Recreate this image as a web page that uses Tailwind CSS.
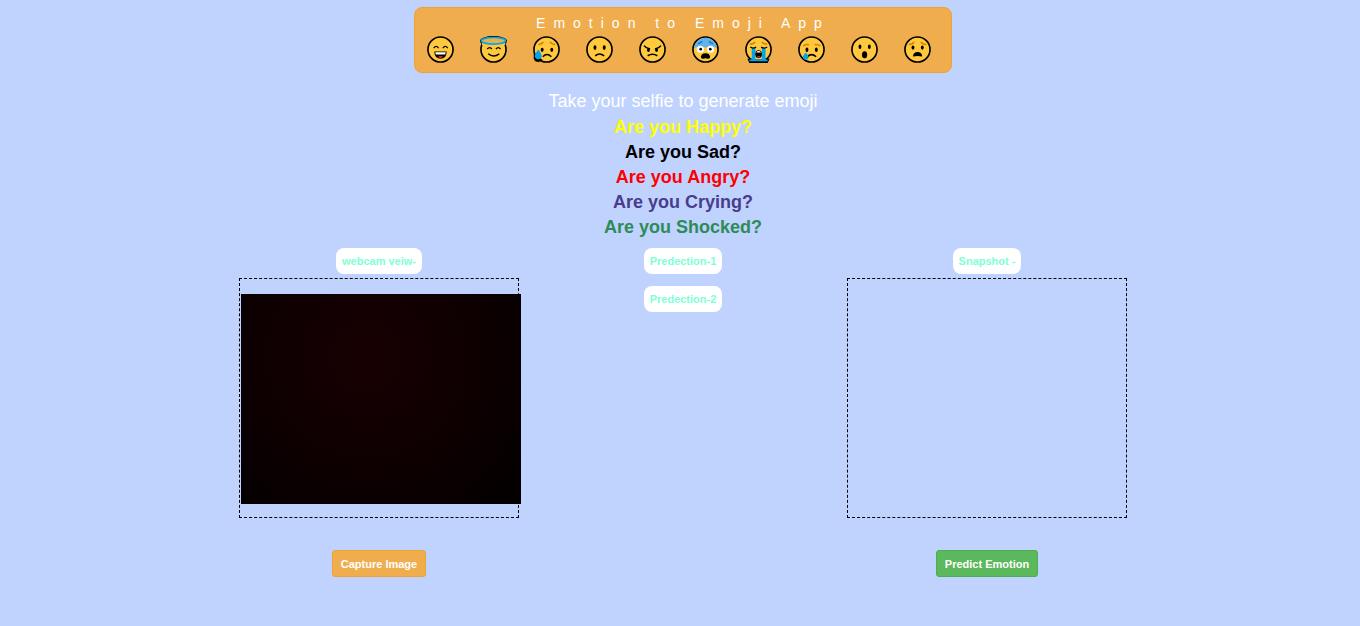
<!DOCTYPE html>
<html lang="en">
<head>
<meta charset="utf-8">
<meta name="viewport" content="width=device-width, initial-scale=1">
<title>Emotion to Emoji App</title>
<script src="https://cdn.jsdelivr.net/npm/@tailwindcss/browser@4"></script>
</head>
<body class="min-h-screen bg-[#c0d3ff] font-['Liberation_Sans',Arial,sans-serif]">
<svg class="hidden" aria-hidden="true">
  <symbol id="face" viewBox="0 0 28 28"><circle cx="14" cy="14" r="13" fill="#ffc83d" stroke="#000" stroke-width="1.7"/></symbol>
</svg>
<main class="flex flex-col items-center pt-[7px] pl-[6px]">
  <header class="flex w-full max-w-[538px] flex-col rounded-lg border border-[#eea236] bg-[#f0ad4e] px-3 pt-[5px] pb-[9px]">
    <h1 class="text-center text-sm leading-5 tracking-[8px] text-white">Emotion to Emoji App</h1>
    <div class="mt-[3px] flex gap-[26px] [&>svg]:size-[27px] [&>svg]:shrink-0">
      <svg viewBox="0 0 28 28" role="img" aria-label="Grinning">
        <use href="#face"/>
        <path d="M7 12.5Q9.500 9 12 12.500M16.500 12.500Q19 9 21.500 12.500" fill="none" stroke="#000" stroke-width="1.300"/>
        <path d="M7.500 16H20.500Q20 23.500 14 23.500T7.500 16Z" fill="#000"/><path d="M8.500 16.800H19.500L18.800 19.300H9.200Z" fill="#fff"/><ellipse cx="14" cy="21.800" rx="2.300" ry="1" fill="#d52b1e"/>
      </svg>
      <svg viewBox="0 0 28 28" role="img" aria-label="Halo" class="overflow-visible">
        <use href="#face"/>
        <path d="M0 5A14 5 0 0 1 28 5Q28 7 26 8.500H2Q0 7 0 5Z"/>
        <path d="M2 7H26V9.500H2Z" fill="#ffc83d"/>
        <ellipse cx="14" cy="5" rx="12.600" ry="3.400" fill="#e6b04a" stroke="#00a6ed" stroke-width="1.700"/>
        <path d="M7.500 13.500Q10 10.500 12.300 13.500M16.500 13.500Q19 10.500 21.300 13.500M8.500 18.500Q14 23 20 18.500" fill="none" stroke="#000" stroke-width="1.400"/>
      </svg>
      <svg viewBox="0 0 28 28" role="img" aria-label="Disappointed">
        <use href="#face"/>
        <path d="M5.500 9Q9 8.500 10.800 6.200M17.500 6.200Q19 8.500 23 9" fill="none" stroke="#d67d00" stroke-width="1.500"/>
        <path d="M.800 17V23Q1.500 27 6 27L10 25Z" fill="#000"/>
        <path d="M5.500 14Q9 18.500 9 21A3.600 3.600 0 0 1 1.900 21Q1.900 18.500 5.500 14Z" fill="#00a6ed"/>
        <ellipse cx="9.500" cy="14.300" rx="1.500" ry="2.200"/><ellipse cx="19.500" cy="14.300" rx="1.500" ry="2.200"/>
        <path d="M10.200 21.500Q14.500 17 19 21.500" fill="none" stroke="#000" stroke-width="1.600"/>
      </svg>
      <svg viewBox="0 0 28 28" role="img" aria-label="Frowning">
        <use href="#face"/>
        <ellipse cx="9.300" cy="12" rx="1.500" ry="2.400"/><ellipse cx="18.900" cy="12" rx="1.500" ry="2.400"/>
        <path d="M9.500 20.500Q14 17 18.800 20.500" fill="none" stroke="#000" stroke-width="1.600"/>
      </svg>
      <svg viewBox="0 0 28 28" role="img" aria-label="Angry">
        <use href="#face"/>
        <path d="M5.200 10Q7.500 13 11.500 13.500M22.800 10Q20.500 13 16.500 13.500M9 20.500Q14 17.500 19 20.500" fill="none" stroke="#000" stroke-width="1.600"/>
        <ellipse cx="9.800" cy="14.500" rx="1.500" ry="2"/><ellipse cx="18.200" cy="14.500" rx="1.500" ry="2"/>
      </svg>
      <svg viewBox="0 0 28 28" role="img" aria-label="Fearful">
        <use href="#face"/>
        <path d="M1.900 12.500A12.200 12.200 0 0 1 26.100 12.500Q20 9.500 14 12Q8 9.500 1.900 12.500Z" fill="#62b2f0"/>
        <path d="M6 8Q8.500 7.500 10.500 5.500M17.500 5.500Q19.500 7.500 22 8" fill="none" stroke="#1474c4" stroke-width="1.300"/>
        <circle cx="8.700" cy="13.700" r="3.700" fill="#fff"/><circle cx="19.300" cy="13.700" r="3.700" fill="#fff"/><circle cx="9" cy="13.700" r="1.400"/><circle cx="19" cy="13.700" r="1.400"/>
        <path d="M9.200 21.500Q10 18 14 18T18.800 21.500Q18.800 23.700 16.500 23.500Q14 22.500 11.500 23.500Q9.200 23.700 9.200 21.500Z"/>
      </svg>
      <svg viewBox="0 0 28 28" role="img" aria-label="Crying loudly">
        <use href="#face"/>
        <path d="M5 8.500Q9 8.500 10.500 6M17.500 6Q19 8.500 23 8.500" fill="none" stroke="#d67d00" stroke-width="1.500"/>
        <path d="M2.500 23.500H25.500L23.500 28H4.500Z"/>
        <path d="M7 12.500H10.800V24H17.500V12.500H21.300V24L23.500 24.500V26.300H4.500V24.500L7 24Z" fill="#00a6ed"/>
        <path d="M10.800 20H17.500V24H10.800Z" fill="#ffc83d"/>
        <path d="M5.500 11.500Q8 13.500 11.500 11.500M16.700 11.500Q20 13.500 23 11.500" fill="none" stroke="#000" stroke-width="1.300"/>
        <ellipse cx="14.100" cy="18.800" rx="3.400" ry="4"/><path d="M11.500 17Q14 14 16.800 17Z" fill="#fff"/><ellipse cx="14.100" cy="21.500" rx="1.700" ry=".7" fill="#d52b1e"/>
      </svg>
      <svg viewBox="0 0 28 28" role="img" aria-label="Crying">
        <use href="#face"/>
        <path d="M5.500 10.800Q7 8.500 11.300 9M17.200 9Q21.500 8.500 23 10.800" fill="none" stroke="#d67d00" stroke-width="1.500"/>
        <ellipse cx="9.300" cy="14.200" rx="1.500" ry="2.300"/><ellipse cx="19" cy="14.200" rx="1.500" ry="2.300"/>
        <path d="M9.700 21.500Q14 17 18.800 21.500" fill="none" stroke="#000" stroke-width="1.600"/>
        <path d="M8 17Q10.900 20 10.900 21.700A2.900 2.900 0 0 1 5.100 21.700Q5.100 20 8 17Z" fill="#00a6ed"/>
      </svg>
      <svg viewBox="0 0 28 28" role="img" aria-label="Surprised">
        <use href="#face"/>
        <ellipse cx="9.300" cy="11.200" rx="1.500" ry="2.300"/><ellipse cx="19" cy="11.200" rx="1.500" ry="2.300"/><ellipse cx="14.100" cy="19.500" rx="2.700" ry="3.700"/>
      </svg>
      <svg viewBox="0 0 28 28" role="img" aria-label="Anguished">
        <use href="#face"/>
        <path d="M5 8.800Q9 8.500 10.500 6M17.500 6Q19 8.500 23 8.800" fill="none" stroke="#d67d00" stroke-width="1.500"/>
        <ellipse cx="9.300" cy="12" rx="1.500" ry="2.200"/><ellipse cx="19" cy="12" rx="1.500" ry="2.200"/>
        <path d="M9.300 21.300Q9.500 16.500 14.100 16.500T18.900 21.300Q14.100 20 9.300 21.300Z"/>
      </svg>
    </div>
  </header>

  <section class="mt-4 text-center text-lg leading-[25px]">
    <h2 class="mb-px text-white">Take your selfie to generate emoji</h2>
    <div class="font-bold">
      <p class="text-[#ffff00]">Are you Happy?</p>
      <p class="text-black">Are you Sad?</p>
      <p class="text-[#ff0000]">Are you Angry?</p>
      <p class="text-[#483d8b]">Are you Crying?</p>
      <p class="text-[#2e8b57]">Are you Shocked?</p>
    </div>
  </section>

  <section class="mt-2 grid w-full max-w-[912px] grid-cols-3 text-[11px] leading-4 font-bold">
    <div class="flex flex-col items-center">
      <h3 class="rounded-lg bg-white px-[6px] py-[5px] text-[#7fffd4]">webcam veiw-</h3>
      <div class="mt-1 flex h-60 w-[280px] items-start border border-dashed border-black pt-[15px] pl-px">
        <div class="h-[210px] w-[280px] shrink-0 bg-[radial-gradient(circle_at_45%_30%,#180002,#0c0001_60%,#020000)]" role="img" aria-label="Webcam view"></div>
      </div>
      <button type="button" class="mt-8 rounded-[3px] border border-[#eea236] bg-[#f0ad4e] px-2 pt-[5px] pb-1 text-white">Capture Image</button>
    </div>
    <div class="flex flex-col items-center gap-3">
      <h3 class="rounded-lg bg-white px-[6px] py-[5px] text-[#7fffd4]">Predection-1</h3>
      <h3 class="rounded-lg bg-white px-[6px] py-[5px] text-[#7fffd4]">Predection-2</h3>
    </div>
    <div class="flex flex-col items-center">
      <h3 class="rounded-lg bg-white px-[6px] py-[5px] text-[#7fffd4]">Snapshot -</h3>
      <div class="mt-1 h-60 w-[280px] border border-dashed border-black"></div>
      <button type="button" class="mt-8 rounded-[3px] border border-[#4cae4c] bg-[#5cb85c] px-2 pt-[5px] pb-1 text-white">Predict Emotion</button>
    </div>
  </section>
</main>
</body>
</html>
